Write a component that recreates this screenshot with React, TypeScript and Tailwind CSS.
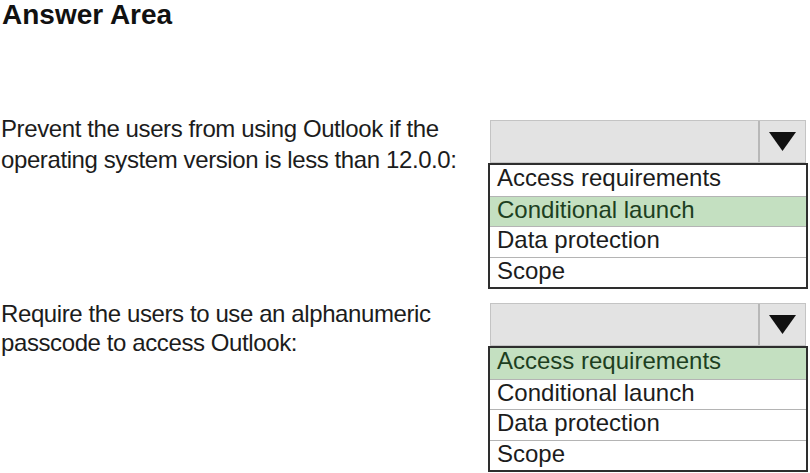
const options = ["Access requirements", "Conditional launch", "Data protection", "Scope"];

function Dropdown({ selected }: { selected: string }) {
  return (
    <div className="w-[320px]">
      <div className="ml-[2px] flex h-[43px] w-[316px] border border-[#c4c4c4] bg-[#e3e3e3]">
        <div className="flex-1" />
        <div className="flex w-[47px] items-center justify-center border-l-2 border-[#b8b8b8]">
          <svg width="27" height="19" viewBox="0 0 27 19">
            <polygon points="0,0 27,0 13.5,19" fill="#111" />
          </svg>
        </div>
      </div>
      <div className="border-2 border-[#2e2e2e] bg-white">
        {options.map((opt, i) => (
          <div
            key={opt}
            className={
              "h-[30.5px] pl-[7px] text-[24px] leading-[26px] " +
              (i > 0 ? "border-t border-[#b4b4b4] " : "") +
              (opt === selected ? "bg-[#c4e0c1] text-[#1d3f1f]" : "text-[#1c1c1c]")
            }
          >
            {opt}
          </div>
        ))}
      </div>
    </div>
  );
}

export default function App() {
  return (
    <div className="h-[473px] w-[810px] bg-white font-['Liberation_Sans',Arial,sans-serif]">
      <h1 className="pl-[2px] text-[28px] font-bold leading-[30px] text-[#111]">Answer Area</h1>

      <div className="mt-[83px] flex">
        <div className="w-[488px] pl-[1px] text-[24px] leading-[31px] tracking-[-0.4px] text-[#1c1c1c]">
          Prevent the users from using Outlook if the
          <br />
          operating system version is less than 12.0.0:
        </div>
        <div className="mt-[7px]">
          <Dropdown selected="Conditional launch" />
        </div>
      </div>

      <div className="mt-[10px] flex">
        <div className="w-[488px] pl-[1px] text-[24px] leading-[29px] tracking-[-0.4px] text-[#1c1c1c]">
          Require the users to use an alphanumeric
          <br />
          passcode to access Outlook:
        </div>
        <div className="mt-[4px]">
          <Dropdown selected="Access requirements" />
        </div>
      </div>
    </div>
  );
}
